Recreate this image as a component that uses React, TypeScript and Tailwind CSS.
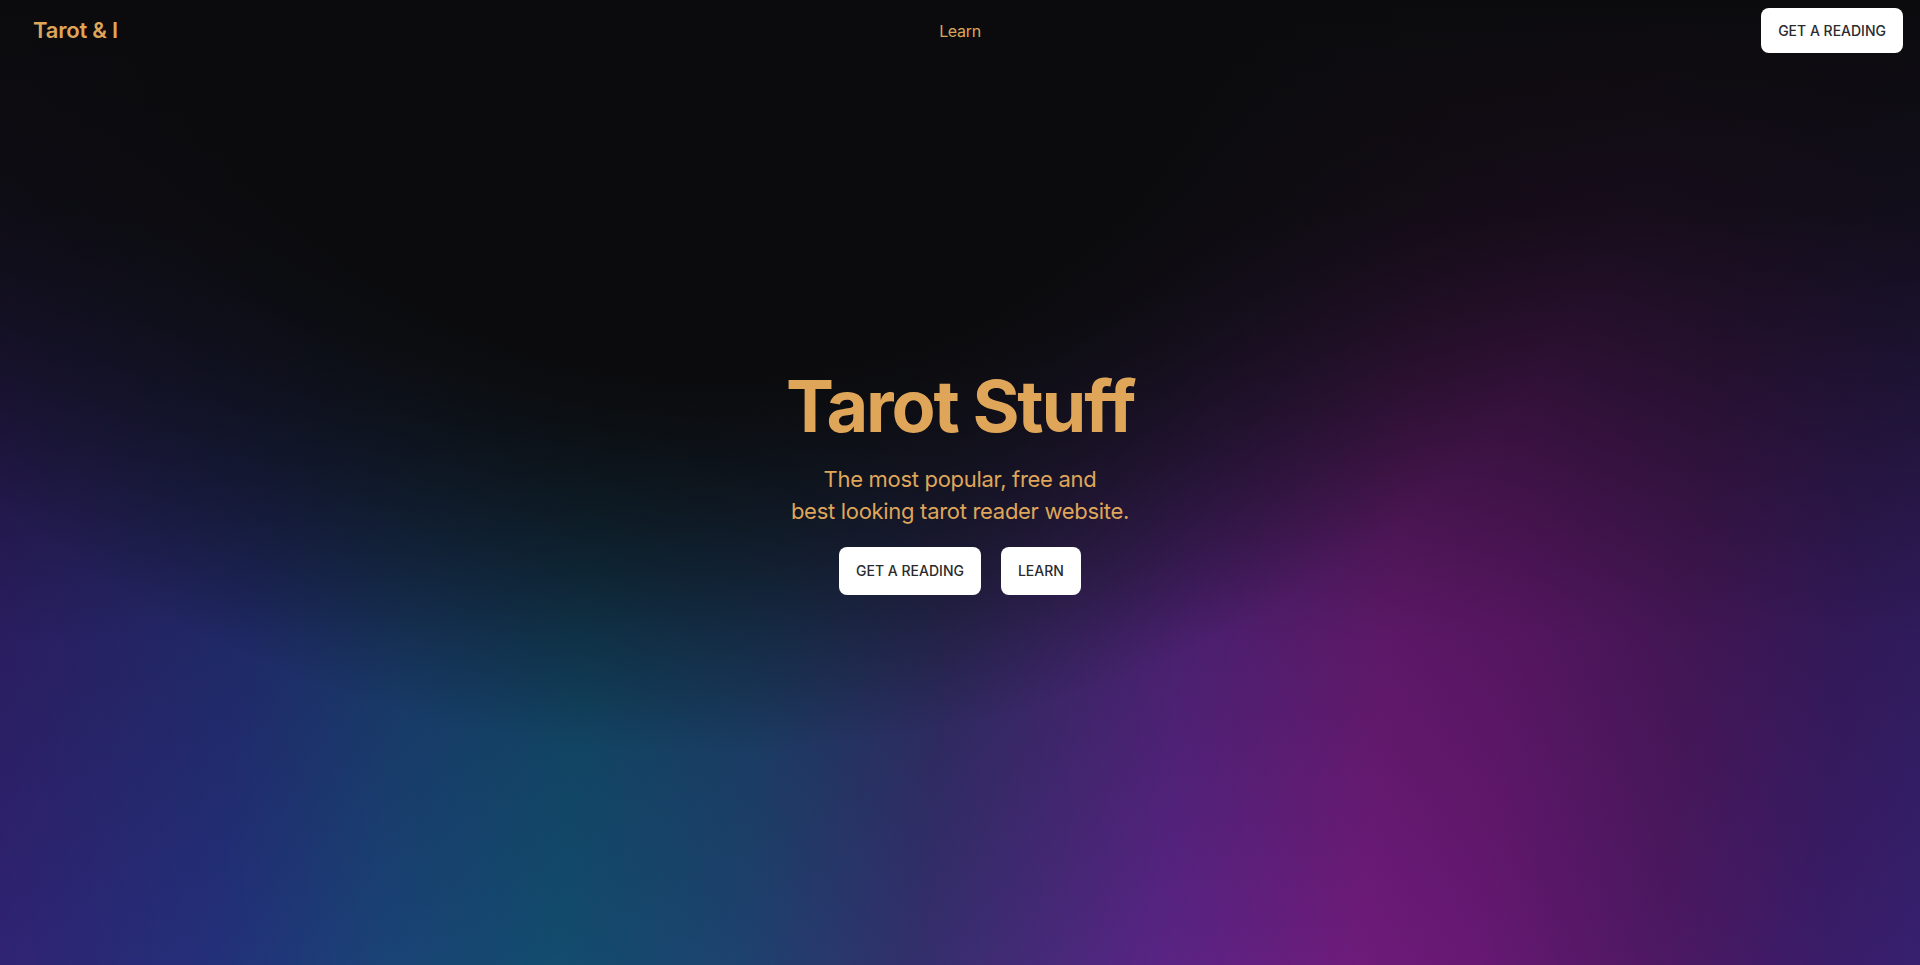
import React from 'react';

const gold = 'text-[#dfa65a]';

const NavButton: React.FC<{ label: string; className?: string }> = ({ label, className = '' }) => (
  <button
    className={`bg-white text-[#2b2b2e] text-sm font-medium uppercase rounded-lg px-[17px] ${className}`}
  >
    {label}
  </button>
);

export default function App() {
  return (
    <div
      className="relative min-h-screen w-full overflow-hidden bg-[#0b0b0d] font-['Inter','Liberation_Sans',sans-serif]"
    >
      {/* colour bands */}
      <div className="absolute inset-0 bg-[linear-gradient(95deg,#341e70_0%,#23307a_15%,#1a4276_23%,#124c6e_32%,#1d426e_41%,#332f6c_50%,#582484_62%,#6e1b7a_72%,#661872_78%,#4d1862_87%,#3a1c68_95%,#37206f_100%)]" />
      {/* dark fade from the top */}
      <div className="absolute inset-0 bg-[linear-gradient(to_bottom,#0b0b0d_0%,rgba(11,11,13,0.85)_22%,rgba(11,11,13,0.18)_66%,rgba(11,11,13,0)_100%)]" />
      <div className="absolute inset-0 bg-[radial-gradient(ellipse_50%_78%_at_37%_0%,#0b0b0d_50%,rgba(11,11,13,0.55)_72%,rgba(11,11,13,0)_100%)]" />

      <header className="absolute top-0 inset-x-0 z-10 grid grid-cols-[1fr_auto_1fr] items-center h-[61px] px-[17px]">
        <div className={`pl-4 text-[22px] font-semibold tracking-[-0.2px] ${gold}`}>Tarot &amp; I</div>
        <nav className={`text-base tracking-[-0.3px] ${gold}`}>Learn</nav>
        <div className="flex justify-end">
          <NavButton label="Get a reading" className="h-[45px]" />
        </div>
      </header>

      <main className="relative z-10 flex min-h-screen flex-col items-center justify-center text-center">
        <h1 className={`text-7xl leading-none font-bold tracking-[-2.2px] ${gold}`}>Tarot Stuff</h1>
        <p className={`mt-[21px] text-[22px] leading-8 tracking-[-0.3px] ${gold}`}>
          The most popular, free and
          <br />
          best looking tarot reader website.
        </p>
        <div className="mt-[20px] flex gap-5">
          <NavButton label="Get a reading" className="h-12" />
          <NavButton label="Learn" className="h-12" />
        </div>
      </main>
    </div>
  );
}
